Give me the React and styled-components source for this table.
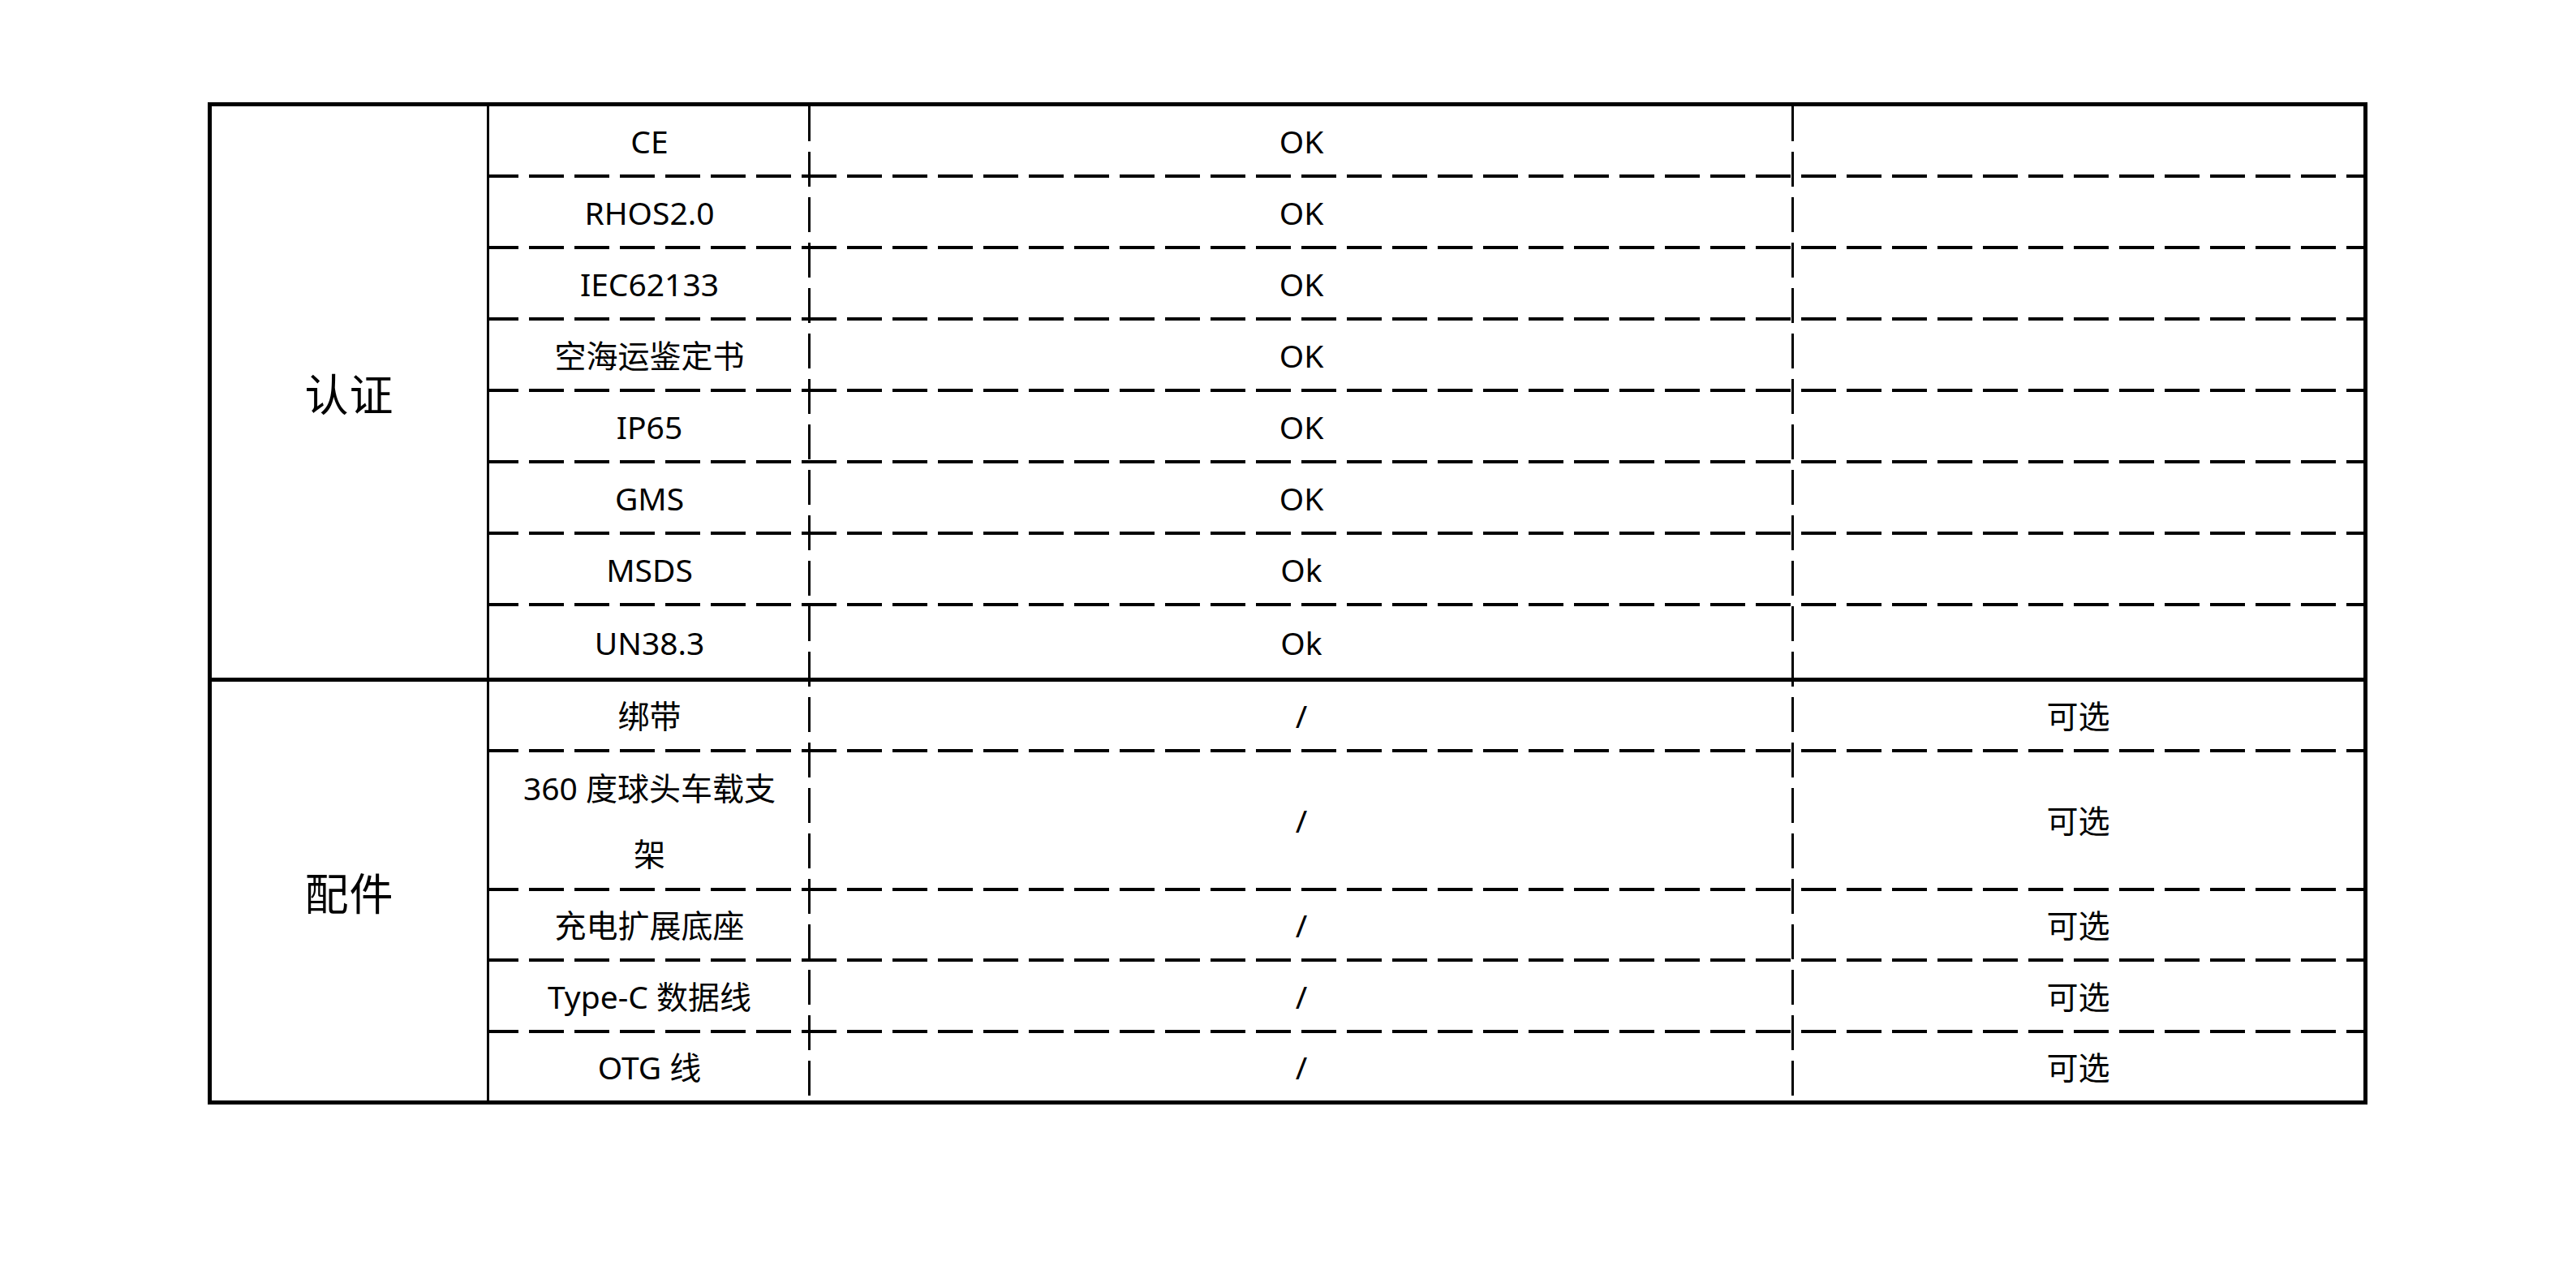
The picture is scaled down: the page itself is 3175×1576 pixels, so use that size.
import React from "react";
import styled, { createGlobalStyle } from "styled-components";

const GlobalStyle = createGlobalStyle`
  html, body {
    margin: 0;
    padding: 0;
    background: #fff;
  }
  body {
    font-family: "Noto Sans", "Noto Sans CJK SC", sans-serif;
    color: #000;
  }
`;

// dash pattern of the Word table borders: 43px ink, 13px gap
const vDash = "repeating-linear-gradient(to bottom, #000 0 43px, transparent 43px 56px)";
const hDash =
  "repeating-linear-gradient(to right, #000 0 36px, transparent 36px 49px, #000 49px 56px)";

const Page = styled.div`
  width: 3175px;
  min-height: 1576px;
  padding: 126px 0 0 256px;
  box-sizing: border-box;
`;

const Table = styled.div`
  width: 2662px;
  box-sizing: border-box;
  border: 5px solid #000;
  display: flex;
  flex-direction: column;
  background-image: ${vDash}, ${vDash};
  background-size: 3px 100%, 3px 100%;
  background-position: 735px 0, 1947px 0;
  background-repeat: no-repeat;
`;

const Group = styled.div`
  display: flex;
  border-top: ${p => (p.$divided ? "5px solid #000" : "none")};
`;

const GroupLabel = styled.div`
  width: 342px;
  flex: none;
  box-sizing: border-box;
  border-right: 3px solid #000;
  display: flex;
  align-items: center;
  justify-content: center;
  font-size: 54px;
  letter-spacing: 1px;
`;

const Rows = styled.div`
  flex: 1;
  display: flex;
  flex-direction: column;
`;

const Row = styled.div`
  display: grid;
  grid-template-columns: 395px 1212px 1fr;
  height: ${p => p.$h}px;
  box-sizing: border-box;
  padding-bottom: ${p => (p.$last ? 0 : 4)}px;
  background-image: ${p => (p.$last ? "none" : hDash)};
  background-size: 100% 4px;
  background-position: 0 100%;
  background-repeat: no-repeat;
`;

const Cell = styled.div`
  display: flex;
  align-items: center;
  justify-content: center;
  text-align: center;
  font-size: 39px;
  line-height: 81px;
  padding: 0 ${p => p.$pad || 0}px;
`;

const groups = [
  {
    label: "认证",
    rows: [
      ["CE", "OK", ""],
      ["RHOS2.0", "OK", ""],
      ["IEC62133", "OK", ""],
      ["空海运鉴定书", "OK", ""],
      ["IP65", "OK", ""],
      ["GMS", "OK", ""],
      ["MSDS", "Ok", ""],
      ["UN38.3", "Ok", ""]
    ],
    heights: [88, 88, 88, 88, 88, 88, 88, 88]
  },
  {
    label: "配件",
    rows: [
      ["绑带", "/", "可选"],
      ["360 度球头车载支架", "/", "可选"],
      ["充电扩展底座", "/", "可选"],
      ["Type-C 数据线", "/", "可选"],
      ["OTG 线", "/", "可选"]
    ],
    heights: [87, 171, 87, 88, 83]
  }
];

function App() {
  return (
    <Page>
      <GlobalStyle />
      <Table>
        {groups.map((g, gi) => (
          <Group key={g.label} $divided={gi > 0}>
            <GroupLabel>{g.label}</GroupLabel>
            <Rows>
              {g.rows.map((r, i) => (
                <Row key={r[0]} $h={g.heights[i]} $last={i === g.rows.length - 1}>
                  <Cell $pad={30}>{r[0]}</Cell>
                  <Cell>{r[1]}</Cell>
                  <Cell>{r[2]}</Cell>
                </Row>
              ))}
            </Rows>
          </Group>
        ))}
      </Table>
    </Page>
  );
}

export default App;
